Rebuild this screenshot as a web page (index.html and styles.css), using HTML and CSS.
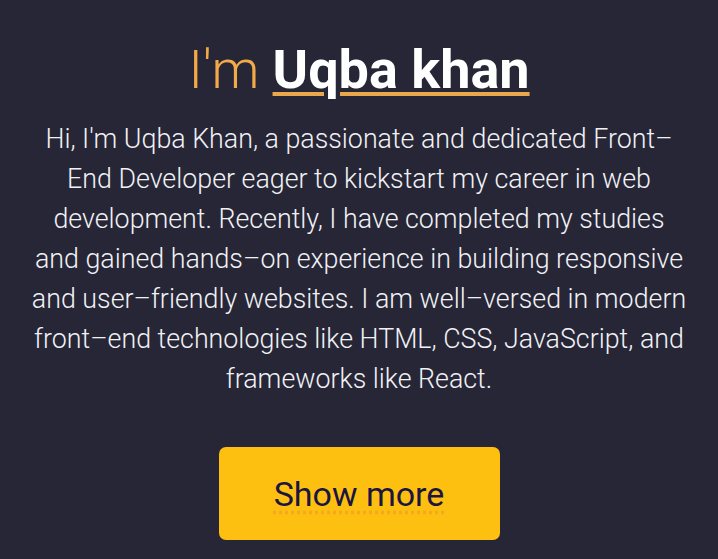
FILE: index.html
```html
<!DOCTYPE html>
<html lang="en">
<head>
<meta charset="utf-8">
<title>Uqba khan</title>
<link rel="stylesheet" href="styles.css">
</head>
<body>
<section class="hero">
  <h1 class="title"><span class="intro">I'm </span><span class="name">Uqba khan</span></h1>
  <p class="bio">Hi, I'm Uqba Khan, a passionate and dedicated Front–End Developer eager to kickstart my career in web development. Recently, I have completed my studies and gained hands–on experience in building responsive and user–friendly websites. I am well–versed in modern front–end technologies like HTML, CSS, JavaScript, and frameworks like React.</p>
  <button class="more">Show more</button>
</section>
</body>
</html>
```
FILE: styles.css
```css
html, body {
  margin: 0;
  padding: 0;
  background: #262637;
  height: 100%;
}
body {
  font-family: Roboto, "Liberation Sans", sans-serif;
  overflow: hidden;
}
.hero {
  display: flex;
  flex-direction: column;
  align-items: center;
  padding: 38px 20px 0;
}
.title {
  margin: 0;
  font-size: 54px;
  line-height: 64px;
  font-weight: 300;
  white-space: nowrap;
}
.intro {
  color: #f2a948;
  font-weight: 300;
}
.name {
  color: #ffffff;
  font-weight: 700;
  text-decoration: underline;
  text-decoration-color: #eaa84c;
  text-decoration-thickness: 4px;
  text-underline-offset: 4px;
}
.bio {
  margin: 17px 0 0;
  width: 655px;
  text-align: center;
  color: #f1f1f4;
  font-size: 26.8px;
  font-weight: 300;
  line-height: 40px;
}
.more {
  margin-top: 48px;
  width: 281px;
  height: 93px;
  border: none;
  border-radius: 7px;
  background: #fdc010;
  color: #1c1542;
  font-family: Roboto, "Liberation Sans", sans-serif;
  font-size: 34px;
  font-weight: 400;
  text-decoration: underline dotted rgba(230, 120, 60, 0.35);
  text-underline-offset: 5px;
}
```
